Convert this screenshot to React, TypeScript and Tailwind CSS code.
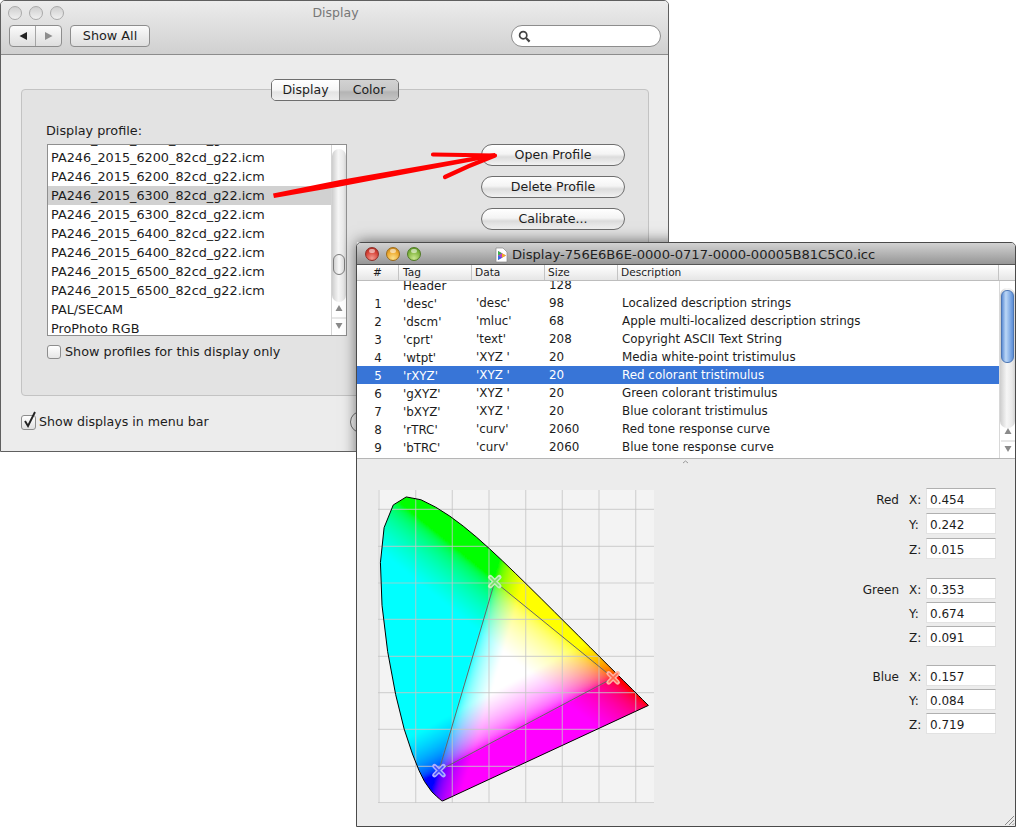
import { useMemo } from "react";

const PROFILES = [
  "PA246_2015_6200_82cd_g22.icm",
  "PA246_2015_6200_82cd_g22.icm",
  "PA246_2015_6200_82cd_g22.icm",
  "PA246_2015_6300_82cd_g22.icm",
  "PA246_2015_6300_82cd_g22.icm",
  "PA246_2015_6400_82cd_g22.icm",
  "PA246_2015_6400_82cd_g22.icm",
  "PA246_2015_6500_82cd_g22.icm",
  "PA246_2015_6500_82cd_g22.icm",
  "PAL/SECAM",
  "ProPhoto RGB",
];

const TAGS = [
  ["", "Header", "", "128", ""],
  ["1", "'desc'", "'desc'", "98", "Localized description strings"],
  ["2", "'dscm'", "'mluc'", "68", "Apple multi-localized description strings"],
  ["3", "'cprt'", "'text'", "208", "Copyright ASCII Text String"],
  ["4", "'wtpt'", "'XYZ '", "20", "Media white-point tristimulus"],
  ["5", "'rXYZ'", "'XYZ '", "20", "Red colorant tristimulus"],
  ["6", "'gXYZ'", "'XYZ '", "20", "Green colorant tristimulus"],
  ["7", "'bXYZ'", "'XYZ '", "20", "Blue colorant tristimulus"],
  ["8", "'rTRC'", "'curv'", "2060", "Red tone response curve"],
  ["9", "'bTRC'", "'curv'", "2060", "Blue tone response curve"],
];

const COLORANTS = [
  { name: "Red", gap: "gap-y-[4px]", values: ["0.454", "0.242", "0.015"] },
  { name: "Green", gap: "gap-y-[3px] mt-[19px]", values: ["0.353", "0.674", "0.091"] },
  { name: "Blue", gap: "gap-y-[3px] mt-[18px]", values: ["0.157", "0.084", "0.719"] },
];

// CIE 1931 spectral locus, 380nm round to 700nm
const LOCUS = [
  [0.1741, 0.005], [0.1714, 0.0051], [0.1644, 0.0109], [0.1566, 0.0177], [0.144, 0.0297],
  [0.1241, 0.0578], [0.1096, 0.0868], [0.0913, 0.1327], [0.0687, 0.2007], [0.0454, 0.295],
  [0.0235, 0.4127], [0.0082, 0.5384], [0.0039, 0.6548], [0.0139, 0.7502], [0.0389, 0.812],
  [0.0743, 0.8338], [0.1142, 0.8262], [0.1547, 0.8059], [0.1929, 0.7816], [0.2296, 0.7543],
  [0.2658, 0.7243], [0.3016, 0.6923], [0.3373, 0.6589], [0.3731, 0.6245], [0.4087, 0.5896],
  [0.4441, 0.5547], [0.4788, 0.5202], [0.5125, 0.4866], [0.5448, 0.4544], [0.5752, 0.4242],
  [0.6029, 0.3965], [0.627, 0.3725], [0.6658, 0.334], [0.6915, 0.3083], [0.7079, 0.292],
  [0.719, 0.2809], [0.7347, 0.2653],
];

// page px -> svg units: the plot's origin sits 1px in and 312.7px down
const px = (x: number) => 1 + 366.7 * x;
const py = (y: number) => 312.7 - 366.7 * y;

// inverse of the profile's colorant matrix (XYZ -> linear RGB)
function inverse3(m: number[][]) {
  const [[a, b, c], [d, e, f], [g, h, i]] = m;
  const det = a * (e * i - f * h) - b * (d * i - f * g) + c * (d * h - e * g);
  return [
    [(e * i - f * h) / det, (c * h - b * i) / det, (b * f - c * e) / det],
    [(f * g - d * i) / det, (a * i - c * g) / det, (c * d - a * f) / det],
    [(d * h - e * g) / det, (b * g - a * h) / det, (a * e - b * d) / det],
  ];
}
const XYZ2RGB = inverse3([
  [0.454, 0.353, 0.157],
  [0.242, 0.674, 0.084],
  [0.015, 0.091, 0.719],
]);

function cellColor(x: number, y: number) {
  const xyz = [x, y, 1 - x - y];
  const lin = XYZ2RGB.map((row) =>
    Math.max(0, (row[0] * xyz[0] + row[1] * xyz[1] + row[2] * xyz[2]) * 3.6)
  );
  // always lift the strongest channel to full, the plot has no dark areas
  const top = Math.max(lin[0], lin[1], lin[2], 0.001);
  const boost = top < 1 ? 1 / top : 1;
  const rgb = lin.map((v) => Math.round(255 * Math.pow(Math.min(1, v * boost), 1 / 2.1)));
  return `rgb(${rgb[0]},${rgb[1]},${rgb[2]})`;
}

function Chromaticity() {
  const cells = useMemo(() => {
    const out: { x: number; y: number; fill: string }[] = [];
    for (let sy = 0; sy < 316; sy += 2) {
      for (let sx = -4; sx < 276; sx += 2) {
        const x = (sx + 1 - 1) / 366.7;
        const y = (312.7 - sy - 1) / 366.7;
        if (x + y > 1.04) continue;
        out.push({ x: sx, y: sy, fill: cellColor(Math.max(x, 0), Math.max(y, 0.001)) });
      }
    }
    return out;
  }, []);
  const outline = LOCUS.map(([x, y]) => `${px(x)},${py(y)}`).join(" ");
  const gridX = [1, 37.7, 74.3, 111, 147.7, 184.3, 221, 257.7];
  const gridY = [19.3, 56.3, 93, 129.3, 166.3, 202.7, 239.3, 276.3, 312.7];
  const tri = [
    [0.6385, 0.3403],
    [0.3157, 0.6029],
    [0.1635, 0.0875],
  ];
  const crosses = [
    { x: px(tri[0][0]), y: py(tri[0][1]), c: "#ffb4a4", d: "#ff6a50" },
    { x: px(tri[1][0]), y: py(tri[1][1]), c: "#c4f0bc", d: "#7ce070" },
    { x: px(tri[2][0]), y: py(tri[2][1]), c: "#b0b0ff", d: "#4a50ff" },
  ];
  return (
    <svg width="276" height="314" viewBox="0 0 276 314" className="block shrink-0">
      <defs>
        <clipPath id="horseshoe">
          <polygon points={outline} />
        </clipPath>
        <filter id="soft" x="-5" y="0" width="290" height="320" filterUnits="userSpaceOnUse">
          <feGaussianBlur stdDeviation="1.2" />
        </filter>
      </defs>
      <rect width="276" height="314" fill="#f3f3f3" />
      <g clipPath="url(#horseshoe)">
        <g filter="url(#soft)" shapeRendering="crispEdges">
          {cells.map((c) => (
            <rect key={`${c.x}-${c.y}`} x={c.x} y={c.y} width="2.2" height="2.2" fill={c.fill} />
          ))}
        </g>
      </g>
      <g stroke="#c4c4c4" strokeOpacity="0.7" strokeWidth="1.2">
        {gridX.map((x) => (
          <line key={x} x1={x} y1="0" x2={x} y2="313" />
        ))}
        {gridY.map((y) => (
          <line key={y} x1="0" y1={y} x2="276" y2={y} />
        ))}
      </g>
      <polygon points={outline} fill="none" stroke="#000" strokeWidth="1" />
      <polygon
        points={tri.map(([x, y]) => `${px(x)},${py(y)}`).join(" ")}
        fill="none"
        stroke="#666"
        strokeWidth="1"
      />
      {crosses.map((m) => (
        <g key={m.c} strokeLinecap="round">
          <path
            d={`M${m.x - 4.5} ${m.y - 4.5}L${m.x + 4.5} ${m.y + 4.5}M${m.x + 4.5} ${m.y - 4.5}L${m.x - 4.5} ${m.y + 4.5}`}
            stroke={m.c}
            strokeWidth="4.6"
          />
          <path
            d={`M${m.x - 4} ${m.y - 4}L${m.x + 4} ${m.y + 4}M${m.x + 4} ${m.y - 4}L${m.x - 4} ${m.y + 4}`}
            stroke={m.d}
            strokeWidth="1.6"
          />
        </g>
      ))}
    </svg>
  );
}

function PillButton({ children }: { children?: React.ReactNode }) {
  return (
    <div className="w-[144px] h-[22px] rounded-full border border-[#6e6e6e] bg-[linear-gradient(#ffffff_0%,#f4f4f4_45%,#dcdcdc_60%,#f2f2f2_100%)] flex items-center justify-center text-[12.6px] text-[#1c1c1c]">
      {children}
    </div>
  );
}

function Light({ cls }: { cls: string }) {
  return (
    <div className={`relative w-[14px] h-[14px] rounded-full border ${cls}`}>
      <div className="absolute left-[3px] top-[1px] w-[6px] h-[4px] rounded-full bg-white/55" />
    </div>
  );
}

function ScrollArrows({ cls }: { cls: string }) {
  return (
    <svg width="14" height="33" viewBox="0 0 14 33" className={cls}>
      <path d="M7 3l3.5 6h-7z" fill="#8a8a8a" />
      <line x1="0" x2="14" y1="16" y2="16" stroke="#cfcfcf" />
      <path d="M7 27l3.5-6h-7z" fill="#8a8a8a" />
    </svg>
  );
}

function PrefsWindow() {
  return (
    <div className="absolute left-0 top-0 w-[669px] h-[452px] overflow-hidden rounded-t-[5px] border border-[#5f5f5f] bg-[#ececec] flex flex-col">
      {/* title bar + toolbar */}
      <div className="h-[54px] shrink-0 border-b border-[#8c8c8c] bg-[linear-gradient(#ececec,#d0d0d0)] flex flex-col">
        <div className="relative h-[24px] flex items-center pl-[7px] gap-[7px]">
          <div className="w-[14px] h-[14px] rounded-full border border-[#a9a9a9] bg-[linear-gradient(#cfcfcf,#f0f0f0)]" />
          <div className="w-[14px] h-[14px] rounded-full border border-[#a9a9a9] bg-[linear-gradient(#cfcfcf,#f0f0f0)]" />
          <div className="w-[14px] h-[14px] rounded-full border border-[#a9a9a9] bg-[linear-gradient(#cfcfcf,#f0f0f0)]" />
          <span className="absolute left-0 right-0 text-center text-[12.5px] text-[#777] pl-[2px]">Display</span>
        </div>
        <div className="flex items-center pl-[8px] pr-[7px]">
          <div className="w-[53px] h-[22px] rounded-[4px] border border-[#8d8d8d] bg-[linear-gradient(#fbfbfb,#dedede)] flex">
            <div className="w-[26px] flex items-center justify-center border-r border-[#a5a5a5]">
              <svg width="10" height="10" viewBox="0 0 10 10"><path d="M1.5 5L9 1v8z" fill="#222" /></svg>
            </div>
            <div className="flex-1 flex items-center justify-center">
              <svg width="10" height="10" viewBox="0 0 10 10"><path d="M8.5 5L1 1v8z" fill="#8e8e8e" /></svg>
            </div>
          </div>
          <div className="ml-[8px] w-[80px] h-[22px] rounded-[4px] border border-[#8d8d8d] bg-[linear-gradient(#fbfbfb,#dedede)] flex items-center justify-center text-[12.8px] text-[#1c1c1c]">
            Show All
          </div>
          <div className="ml-auto w-[150px] h-[22px] rounded-full border border-[#8d8d8d] bg-white flex items-center pl-[6px]">
            <svg width="13" height="13" viewBox="0 0 13 13" fill="none" stroke="#444">
              <circle cx="5.2" cy="5.2" r="3.6" strokeWidth="1.7" />
              <line x1="8" y1="8" x2="11.6" y2="11.6" strokeWidth="2.2" />
            </svg>
          </div>
        </div>
      </div>

      {/* body */}
      <div className="flex-1 pl-[20px] pr-[19px] pt-[34px]">
        <div className="relative h-[307px] rounded-[4px] border border-[#c3c3c3] bg-[#e3e3e3] pl-[24px] pt-[33px]">
          <div className="absolute left-[249px] top-[-11px] h-[22px] w-[128px] rounded-[5px] border border-[#6e6e6e] overflow-hidden flex text-[12.5px] text-[#1c1c1c]">
            <div className="w-[68px] border-r border-[#8a8a8a] bg-[linear-gradient(#ffffff,#f6f6f6_50%,#e4e4e4_60%,#f0f0f0)] flex items-center justify-center">Display</div>
            <div className="flex-1 bg-[linear-gradient(#d2d2d2,#c8c8c8_50%,#b4b4b4_60%,#c4c4c4)] flex items-center justify-center">Color</div>
          </div>
          <div className="flex items-start">
            <div className="w-[301px]">
              <div className="h-[16px] leading-[16px] text-[12.8px] text-[#1c1c1c]">Display profile:</div>
              <div className="relative ml-px mt-[5px] w-[300px] h-[192px] border border-[#8f8f8f] bg-white overflow-hidden">
                <div className="mt-[-16px] mr-[15px]">
                  {PROFILES.map((p, i) => (
                    <div
                      key={i}
                      className={`h-[19px] leading-[19px] pl-[3px] text-[12.8px] text-[#1c1c1c] whitespace-nowrap ${i === 3 ? "bg-[#d1d1d1]" : ""}`}
                    >
                      {p}
                    </div>
                  ))}
                </div>
                <div className="absolute right-0 top-0 bottom-0 w-[15px] border-l border-[#d4d4d4] bg-white">
                  <div className="absolute left-0 right-0 top-[4px] h-[153px] rounded-[7px] bg-[linear-gradient(90deg,#cdcdcd,#f6f6f6_45%,#e9e9e9_80%,#d4d4d4)]" />
                  <div className="absolute left-[1px] right-[1px] top-[109px] h-[21px] rounded-[6px] border border-[#7d7d7d] bg-[linear-gradient(90deg,#d0d0d0,#fafafa_50%,#dddddd)]" />
                  <ScrollArrows cls="absolute left-0 bottom-0" />
                </div>
              </div>
              <div className="mt-[6px] ml-px flex items-center gap-[4px] text-[12.8px] text-[#1c1c1c]">
                <div className="w-[14px] h-[14px] rounded-[3px] border border-[#8d8d8d] bg-[linear-gradient(#ffffff,#e6e6e6)]" />
                <span>Show profiles for this display only</span>
              </div>
            </div>
            <div className="ml-[134px] mt-[21px] flex flex-col gap-[10px]">
              <PillButton>Open Profile</PillButton>
              <PillButton>Delete Profile</PillButton>
              <PillButton>Calibrate...</PillButton>
            </div>
          </div>
        </div>
        <div className="relative mt-[15px] flex items-center gap-[3px] text-[12.6px] text-[#1c1c1c] h-[22px]">
          <div className="relative w-[15px] h-[15px] rounded-[3px] border border-[#8d8d8d] bg-[linear-gradient(#ffffff,#e0e0e0)]">
            <svg width="16" height="18" viewBox="0 0 16 18" className="absolute left-0 top-[-5px]">
              <path d="M3 10l3 5 7-14" fill="none" stroke="#222" strokeWidth="1.9" />
            </svg>
          </div>
          <span>Show displays in menu bar</span>
          <div className="absolute left-[329px] top-0 w-[40px] h-[22px] rounded-full border border-[#6e6e6e] bg-[#f4f4f4]" />
        </div>
      </div>

      {/* shadow the front window throws onto this one */}
      <div className="absolute left-[356px] top-[241px] w-[400px] h-[400px] shadow-[0_0_14px_rgba(0,0,0,0.6)]" />
    </div>
  );
}

function ProfileWindow() {
  const cols = "flex items-center text-[11.9px] whitespace-nowrap";
  return (
    <div className="absolute left-[356px] top-[242px] w-[660px] h-[585px] overflow-hidden rounded-t-[5px] border border-[#4a4a4a] bg-[#ececec] flex flex-col">
      <div className="relative h-[22px] shrink-0 border-b border-[#555] bg-[linear-gradient(#d2d2d2,#969696)] flex items-center pl-[8px] gap-[7px]">
        <Light cls="border-[#8f2f28] bg-[radial-gradient(circle_at_50%_85%,#f39a8e,#d8453a_55%,#a3241b)]" />
        <Light cls="border-[#9c6a18] bg-[radial-gradient(circle_at_50%_85%,#fbe08a,#eeaa30_55%,#b97a14)]" />
        <Light cls="border-[#4f7a22] bg-[radial-gradient(circle_at_50%_85%,#c9e68e,#86b843_55%,#4f8a1e)]" />
        <div className="absolute left-[138px] top-[2px] flex items-center gap-[4px] text-[13.1px] text-[#1e1e1e]">
          <svg width="13" height="16" viewBox="0 0 13 16">
            <path d="M1 1h7l4 4v10H1z" fill="#fff" stroke="#888" strokeWidth="0.7" />
            <path d="M3 4v9l8-4.5z" fill="#c23cc8" />
            <path d="M3 4v4.5l4-2.2z" fill="#39b54a" />
            <path d="M3 8.5V13l4-2.2z" fill="#2f6fe0" />
            <path d="M7 6.3l4 2.2-4 2.3z" fill="#f0b020" />
          </svg>
          <span>Display-756E6B6E-0000-0717-0000-00005B81C5C0.icc</span>
        </div>
      </div>

      <div className="h-[16px] shrink-0 border-b border-[#bdbdbd] bg-[linear-gradient(#ffffff,#e6e6e6)] flex text-[10.6px] text-[#1c1c1c] leading-[15px]">
        <div className="w-[42px] text-center border-r border-[#c4c4c4]">#</div>
        <div className="w-[73px] pl-[4px] border-r border-[#c4c4c4]">Tag</div>
        <div className="w-[73px] pl-[3px] border-r border-[#c4c4c4]">Data</div>
        <div className="w-[73px] pl-[3px] border-r border-[#c4c4c4]">Size</div>
        <div className="w-[381px] pl-[3px] border-r border-[#c4c4c4]">Description</div>
      </div>

      <div className="relative h-[178px] shrink-0 bg-white border-b border-[#b5b5b5] overflow-hidden">
        <div className="mt-[-5px] mr-[16px]">
          {TAGS.map((row, i) => (
            <div
              key={i}
              className={`${cols} h-[18px] pt-[2px] ${i === 5 ? "bg-[#3875d7] text-white" : "text-[#1c1c1c]"}`}
            >
              <div className="w-[42px] text-center pt-[2px]">{row[0]}</div>
              <div className="w-[73px] pl-[4px] pt-[2px]">{row[1]}</div>
              <div className="w-[73px] pl-[4px]">{row[2]}</div>
              <div className="w-[73px] pl-[4px]">{row[3]}</div>
              <div className="pl-[4px]">{row[4]}</div>
            </div>
          ))}
        </div>
        <div className="absolute right-0 top-0 bottom-0 w-[16px] border-l border-[#d8d8d8] bg-white">
          <div className="absolute left-0 right-0 top-[7px] h-[140px] rounded-[7px] bg-[linear-gradient(90deg,#cdcdcd,#f6f6f6_45%,#e9e9e9_80%,#d4d4d4)]" />
          <div className="absolute left-[1px] right-[1px] top-[9px] h-[73px] rounded-[6px] border border-[#4d77b5] bg-[linear-gradient(90deg,#5f8fd6,#bcd7f6_35%,#8fb6ea_65%,#5d8fd8)]" />
          <ScrollArrows cls="absolute left-[1px] bottom-0" />
        </div>
      </div>

      <div className="relative flex-1 flex pl-[21px] pt-[31px]">
        <svg width="7" height="4" viewBox="0 0 7 4" className="absolute left-[325px] top-[1px]">
          <path d="M1 3l2.5-2L6 3" fill="none" stroke="#999" />
        </svg>
        <Chromaticity />
        <div className="ml-auto mr-[28px] mt-[-2px] flex flex-col text-[12px] text-[#1c1c1c]">
          {COLORANTS.map((c) => (
            <div key={c.name} className={`grid grid-cols-[auto_18px_70px] items-center ${c.gap}`}>
              {c.values.map((v, i) => (
                <div key={i} className="contents">
                  <div className="w-[51px] text-right pt-[2px]">{i === 0 ? c.name : ""}</div>
                  <div className="ml-[10px] w-[20px] pt-[2px]">{"XYZ"[i]}:</div>
                  <div className="ml-[9px] w-[70px] h-[21px] pt-[2px] border-t border-t-[#b0b0b0] border-x border-x-[#e2e2e2] border-b border-b-[#e2e2e2] bg-white flex items-center pl-[3px] text-[#1c1c1c]">
                    {v}
                  </div>
                </div>
              ))}
            </div>
          ))}
        </div>
        <svg width="11" height="11" viewBox="0 0 11 11" className="absolute right-0 bottom-0" stroke="#8a8a8a">
          <path d="M1 10l9-9M5 10l5-5M8.5 10L10 8.5" />
        </svg>
      </div>
    </div>
  );
}

export default function App() {
  return (
    <div className="relative w-[1016px] h-[827px] overflow-hidden bg-white font-['DejaVu_Sans',sans-serif]">
      <PrefsWindow />
      <ProfileWindow />
      {/* hand drawn arrow pasted over the screenshot */}
      <svg width="1016" height="827" viewBox="0 0 1016 827" className="absolute left-0 top-0 pointer-events-none">
        <path d="M273 193.5L340 180L495 153L495 157L340 186.5L274 198z" fill="#ff0000" />
        <path d="M433 154.5Q465 155 495 155.5Q470 165 445 177" fill="none" stroke="#ff0000" strokeWidth="4.2" strokeLinecap="round" strokeLinejoin="round" />
      </svg>
    </div>
  );
}
